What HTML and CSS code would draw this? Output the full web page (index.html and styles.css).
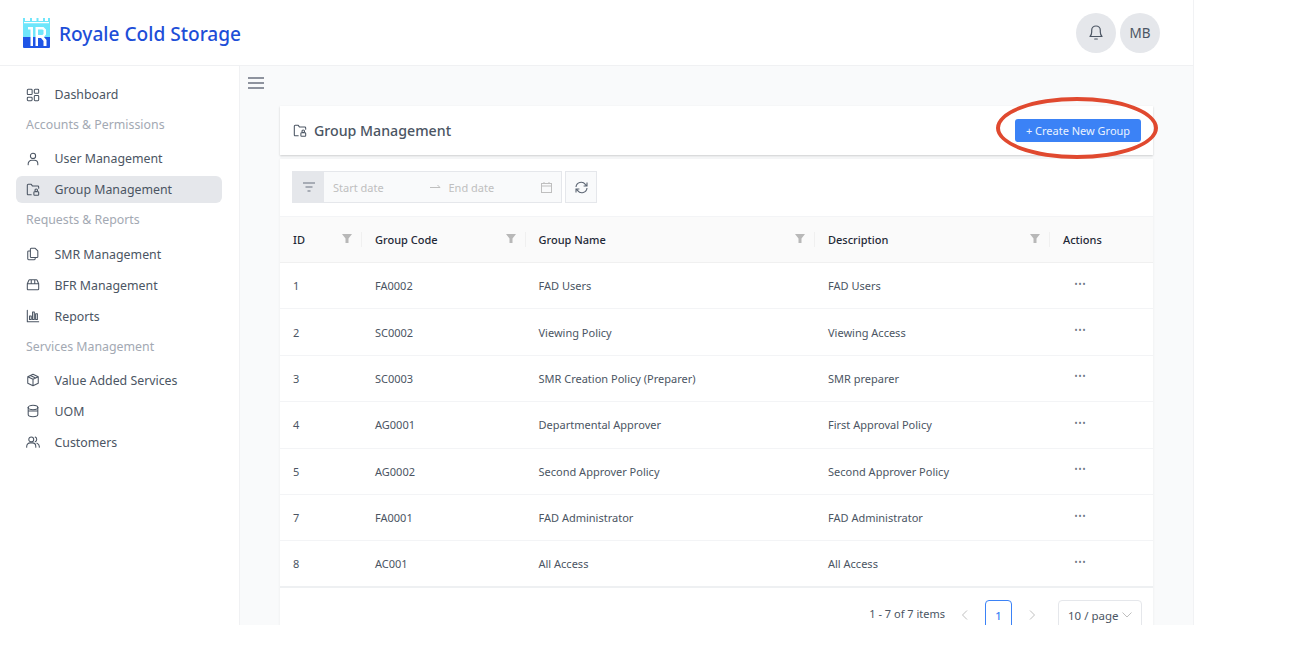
FILE: index.html
```html
<!DOCTYPE html>
<html lang="en">
<head>
<meta charset="utf-8">
<title>Group Management</title>
<link rel="stylesheet" href="styles.css">
</head>
<body>
<div class="app">
  <header class="topbar">
    <div class="brand">
      <svg class="logo" width="27" height="30" viewBox="0 0 27 30">
        <path fill="#6fe6fb" d="M0 0h2v3h5V0h2v3h4.500V0h2v3H20V0h2v3h3V0h2v19H0z"/>
        <path fill="#1f55e6" d="M0 19h27v10a1 1 0 0 1-1 1H1a1 1 0 0 1-1-1z"/>
        <path fill="#fff" d="M1 4h25v1.200H1zM5 9h5v19H7.500V11.500H5zM12.500 9h8l2.500 2.500v5L21 19l2.500 3v6h-3v-5l-2.500-3h-3v8h-2.500z"/>
        <path fill="#6fe6fb" d="M15 11.500h4.500l1 1v3.500l-1 1H15z"/>
      </svg>
      <span class="brand-name">Royale Cold Storage</span>
    </div>
    <div class="top-actions">
      <button class="round-btn" aria-label="Notifications">
        <svg width="16" height="17" viewBox="0 0 16 17" fill="none" stroke="#4b5563" stroke-width="1.200" stroke-linecap="round" stroke-linejoin="round"><path d="M2 12.500h12c-1.200-1.200-1.700-2.500-1.700-4.500V6.300a4.300 4.300 0 0 0-8.600 0V8c0 2-.5 3.300-1.700 4.500zM6.700 15h2.600"/></svg>
      </button>
      <button class="round-btn">MB</button>
    </div>
  </header>

  <div class="body-row">
    <nav class="sidebar">
      <a class="nav-item"><svg class="nav-icon" viewBox="0 0 16 16"><rect x="1.500" y="1.500" width="5.500" height="6" rx="1"/><rect x="9.500" y="1.500" width="5" height="4.500" rx="1"/><rect x="1.500" y="10.500" width="5.500" height="4" rx="1"/><rect x="9.500" y="8.500" width="5" height="6" rx="1"/></svg>Dashboard</a>
      <div class="nav-group">Accounts &amp; Permissions</div>
      <a class="nav-item"><svg class="nav-icon" viewBox="0 0 16 16"><circle cx="8" cy="4.500" r="3"/><path d="M2.500 14.500v-1a4 4 0 0 1 4-4h3a4 4 0 0 1 4 4v1"/></svg>User Management</a>
      <a class="nav-item active"><svg class="nav-icon" viewBox="0 0 16 16"><path d="M6 13.500H2.500a1 1 0 0 1-1-1v-10a1 1 0 0 1 1-1h3.500l1.500 2h6a1 1 0 0 1 1 1V6"/><rect x="9" y="10" width="5.500" height="4" rx=".8"/><circle cx="11.700" cy="8.300" r="1.500"/></svg>Group Management</a>
      <div class="nav-group">Requests &amp; Reports</div>
      <a class="nav-item"><svg class="nav-icon" viewBox="0 0 16 16"><path d="M6 1.500h4.500l3 3V11a1 1 0 0 1-1 1H6a1 1 0 0 1-1-1V2.500a1 1 0 0 1 1-1z"/><path d="M5 4.500H3a1 1 0 0 0-1 1v8a1 1 0 0 0 1 1h6.500a1 1 0 0 0 1-1V12"/></svg>SMR Management</a>
      <a class="nav-item"><svg class="nav-icon" viewBox="0 0 16 16"><path d="M1.500 6.500l1.800-4a1 1 0 0 1 1-.6h7.400a1 1 0 0 1 1 .6l1.800 4v6a1 1 0 0 1-1 1h-11a1 1 0 0 1-1-1zM1.500 6.500h13M6 2v4.500M10 2v4.500"/></svg>BFR Management</a>
      <a class="nav-item"><svg class="nav-icon" viewBox="0 0 16 16"><path d="M1.500 1.500v13h13"/><rect x="4" y="8" width="2" height="4"/><rect x="7.500" y="3.500" width="2" height="8.500"/><rect x="11" y="5.500" width="2" height="6.500"/></svg>Reports</a>
      <div class="nav-group">Services Management</div>
      <a class="nav-item"><svg class="nav-icon" viewBox="0 0 16 16"><path d="M8 1.500l6 2.800v7.400l-6 2.800-6-2.800V4.300zM2 4.300l6 2.900 6-2.900M8 7.200v7.300M5 2.900l6 2.900"/></svg>Value Added Services</a>
      <a class="nav-item"><svg class="nav-icon" viewBox="0 0 16 16"><path d="M2.500 4v8c0 1.400 2.500 2.500 5.500 2.500s5.500-1.100 5.500-2.500V4M2.500 8h11"/><path d="M2.500 4c0-1.400 2.500-2.500 5.500-2.500s5.500 1.100 5.500 2.500"/><path d="M2.500 4c0 1.400 2.500 2.500 5.500 2.500s5.500-1.100 5.500-2.500"/></svg>UOM</a>
      <a class="nav-item"><svg class="nav-icon" viewBox="0 0 16 16"><circle cx="6" cy="5" r="2.800"/><path d="M.8 14v-1a4 4 0 0 1 4-4h2.400a4 4 0 0 1 4 4v1M10.500 2.400a2.800 2.800 0 0 1 0 5.200M12.500 9.300a4 4 0 0 1 2.700 3.700v1"/></svg>Customers</a>
    </nav>

    <main class="content">
      <div class="menu-row">
        <svg width="16" height="14" viewBox="0 0 16 14" stroke="#6b7280" stroke-width="1.500"><path d="M0 2h16M0 7h16M0 12h16"/></svg>
      </div>
      <section class="title-card">
        <h1 class="title"><svg class="nav-icon" viewBox="0 0 16 16"><path d="M6 13.500H2.500a1 1 0 0 1-1-1v-10a1 1 0 0 1 1-1h3.500l1.500 2h6a1 1 0 0 1 1 1V6"/><rect x="9" y="10" width="5.500" height="4" rx=".8"/><circle cx="11.700" cy="8.300" r="1.500"/></svg>Group Management</h1>
        <button class="primary-btn">+ Create New Group</button>
      </section>
      <section class="table-card">
        <div class="toolbar">
          <div class="range">
            <span class="range-filter"><svg width="12" height="10" viewBox="0 0 12 10" stroke="#6b7280" stroke-width="1.100"><path d="M0 1h12M2.500 5h7M4.500 9h3"/></svg></span>
            <span class="range-start">Start date</span>
            <span class="range-arrow"><svg width="11" height="6" viewBox="0 0 11 6" fill="none" stroke="#bfbfbf"><path d="M0 3.500h10L7.500 1"/></svg></span>
            <span class="range-end">End date</span>
            <svg class="range-cal" width="11" height="11" viewBox="0 0 11 11" fill="none" stroke="#bfbfbf"><rect x=".5" y="1.500" width="10" height="9"/><path d="M.5 4h10M3 0v2M8 0v2"/></svg>
          </div>
          <button class="refresh" aria-label="Refresh"><svg width="13" height="13" viewBox="0 0 13 13" fill="none" stroke="#5b6472" stroke-width="1.100"><path d="M1 6a5.200 5.200 0 0 1 9.300-2.700L11.800 5M12 7a5.200 5.200 0 0 1-9.300 2.700L1.200 8M12 1.600V5H8.600M1 11.400V8h3.400"/></svg></button>
        </div>
        <table class="grid">
          <colgroup><col class="c1"><col class="c2"><col class="c3"><col class="c4"><col class="c5"></colgroup>
          <thead>
            <tr>
              <th><span class="th-wrap">ID<svg class="funnel" viewBox="0 0 10 10"><path d="M0 0h10L6.500 4.500V9h-3V4.500z"/></svg></span></th>
              <th><span class="th-wrap">Group Code<svg class="funnel" viewBox="0 0 10 10"><path d="M0 0h10L6.500 4.500V9h-3V4.500z"/></svg></span></th>
              <th><span class="th-wrap">Group Name<svg class="funnel" viewBox="0 0 10 10"><path d="M0 0h10L6.500 4.500V9h-3V4.500z"/></svg></span></th>
              <th><span class="th-wrap">Description<svg class="funnel" viewBox="0 0 10 10"><path d="M0 0h10L6.500 4.500V9h-3V4.500z"/></svg></span></th>
              <th>Actions</th>
            </tr>
          </thead>
          <tbody>
            <tr><td>1</td><td>FA0002</td><td>FAD Users</td><td>FAD Users</td><td><span class="dots">•••</span></td></tr>
            <tr><td>2</td><td>SC0002</td><td>Viewing Policy</td><td>Viewing Access</td><td><span class="dots">•••</span></td></tr>
            <tr><td>3</td><td>SC0003</td><td>SMR Creation Policy (Preparer)</td><td>SMR preparer</td><td><span class="dots">•••</span></td></tr>
            <tr><td>4</td><td>AG0001</td><td>Departmental Approver</td><td>First Approval Policy</td><td><span class="dots">•••</span></td></tr>
            <tr><td>5</td><td>AG0002</td><td>Second Approver Policy</td><td>Second Approver Policy</td><td><span class="dots">•••</span></td></tr>
            <tr><td>7</td><td>FA0001</td><td>FAD Administrator</td><td>FAD Administrator</td><td><span class="dots">•••</span></td></tr>
            <tr><td>8</td><td>AC001</td><td>All Access</td><td>All Access</td><td><span class="dots">•••</span></td></tr>
          </tbody>
        </table>
        <div class="pager">
          <span class="pager-total">1 - 7 of 7 items</span>
          <svg class="chev" width="7" height="10" viewBox="0 0 7 10" fill="none" stroke="#bfbfbf"><path d="M6 .5L1.500 5 6 9.500"/></svg>
          <span class="page-current">1</span>
          <svg class="chev" width="7" height="10" viewBox="0 0 7 10" fill="none" stroke="#bfbfbf"><path d="M1 .5L5.500 5 1 9.500"/></svg>
          <span class="page-size">10 / page<svg width="10" height="6" viewBox="0 0 10 6" fill="none" stroke="#bfbfbf"><path d="M.5.5L5 5 9.500.5"/></svg></span>
        </div>
      </section>
      <div class="highlight"></div>
    </main>
  </div>
</div>
</body>
</html>
```
FILE: styles.css
```css
* { box-sizing: border-box; }
html, body { margin: 0; padding: 0; background: #fff; }
body { font-family: "Noto Sans", "Open Sans", sans-serif; color: #374151; }
.app { width: 1194px; height: 625px; overflow: hidden; display: flex; flex-direction: column; border-right: 1px solid #f1f2f4; }
.topbar { height: 66px; flex: none; display: flex; justify-content: space-between; align-items: center; padding: 0 33px 0 23px; border-bottom: 1px solid #f0f1f3; background: #fff; }
.brand { display: flex; align-items: center; gap: 9px; }
.logo { display: block; margin-top: 0; }
.brand-name { font-size: 19.100px; font-weight: 500; color: #1d4ed8; margin-top: 2px; }
.top-actions { display: flex; gap: 4px; }
.round-btn { width: 40px; height: 40px; border-radius: 50%; border: 0; background: #e5e7eb; color: #4b5563; font: 400 13.500px "Noto Sans", sans-serif; display: flex; align-items: center; justify-content: center; padding: 0; }
.body-row { flex: 1; display: flex; min-height: 0; }
.sidebar { width: 240px; flex: none; background: #fff; border-right: 1px solid #f0f1f3; padding: 15px 17px 0 16px; }
.nav-item { display: flex; align-items: center; height: 27px; margin-bottom: 4px; padding-left: 10px; gap: 14.500px; font-size: 12.350px; color: #4b5563; border-radius: 6px; }
.nav-item.active { background: #e5e7eb; }
.nav-icon { width: 14px; height: 14px; flex: none; fill: none; stroke: #4b5563; stroke-width: 1.200; stroke-linejoin: round; stroke-linecap: round; }
.nav-group { height: 27px; margin-bottom: 6.300px; padding-left: 10px; font-size: 12.350px; line-height: 26px; color: #a3a9b3; }
.content { flex: 1; min-width: 0; position: relative; background: #f9fafb; padding: 0 40px 0 40px; }
.menu-row { position: absolute; left: 8px; top: 10px; line-height: 0; }
.title-card { margin-top: 40px; height: 49px; display: flex; align-items: center; justify-content: space-between; background: #fff; padding: 0 12px 0 13px; box-shadow: 0 1px 2px rgba(0,0,0,.18); }
.title { margin: 0; display: flex; align-items: center; gap: 7px; font-size: 14.200px; font-weight: 500; color: #4b5563; }
.primary-btn { width: 126px; height: 23px; border: 0; border-radius: 3px; background: #3b82f6; color: #eaf2ff; font: 400 11px "Noto Sans", sans-serif; padding: 0; }
.table-card { margin-top: 4px; background: #fff; box-shadow: 0 0 3px rgba(0,0,0,.06); }
.toolbar { height: 57px; display: flex; align-items: center; gap: 3px; padding: 0 12px 1px 12px; }
.range { width: 270px; height: 32px; display: flex; align-items: center; background: #f9fafb; border: 1px solid #e5e7eb; font-size: 11px; color: #bfbfbf; position: relative; }
.range-filter { width: 31px; height: 30px; background: #e5e7eb; display: flex; align-items: center; justify-content: center; }
.range-start { margin-left: 9px; width: 96.500px; }
.range-arrow { line-height: 0; width: 19px; }
.range-end { flex: 1; }
.range-cal { margin-right: 9px; }
.refresh { width: 32px; height: 32px; padding: 0; background: #f9fafb; border: 1px solid #e5e7eb; display: flex; align-items: center; justify-content: center; }
.grid { width: 100%; table-layout: fixed; border-collapse: collapse; font-size: 11px; }
.c1 { width: 82px; } .c2 { width: 163.500px; } .c3 { width: 289.500px; } .c4 { width: 235px; } .c5 { width: 103px; }
.grid th { height: 46px; background: #fafafa; text-align: left; font-weight: 500; color: #1f2937; padding: 0 13px; border-top: 1px solid #f3f4f6; border-bottom: 1px solid #f0f0f0; position: relative; }
.grid th:not(:last-child)::after { content: ""; position: absolute; right: 0; top: 15px; height: 15px; width: 1px; background: #f0f0f0; }
.th-wrap { display: block; }
.funnel { position: absolute; right: 10px; top: 17px; width: 10px; height: 10px; fill: #b8b8b8; }
.grid td { height: 46.400px; padding: 0 13px; color: #4b5563; border-bottom: 1px solid #f3f4f6; }
.grid tr:last-child td { border-bottom: 2px solid #eef0f2; }
.dots { display: block; margin-left: 11.500px; margin-top: -5px; font-size: 8px; letter-spacing: 1px; color: #6b7280; }
.pager { height: 41px; display: flex; align-items: center; justify-content: flex-end; padding: 13px 11px 0 0; font-size: 11px; color: #4b5563; }
.pager-total { margin: 0 16px 3px 0; }
.page-current { width: 27px; height: 30px; margin: 0 17px; border: 1px solid #3b82f6; border-radius: 4px; color: #3b82f6; font-weight: 500; display: flex; align-items: center; justify-content: center; }
.page-size { width: 84px; height: 30px; margin-left: 22px; padding: 0 9px; border: 1px solid #e5e7eb; border-radius: 4px; display: flex; align-items: center; justify-content: space-between; font-size: 11.500px; }
.highlight { position: absolute; left: 756px; top: 31px; width: 162px; height: 62px; border: 4px solid #e0492f; border-radius: 50%; }
```
